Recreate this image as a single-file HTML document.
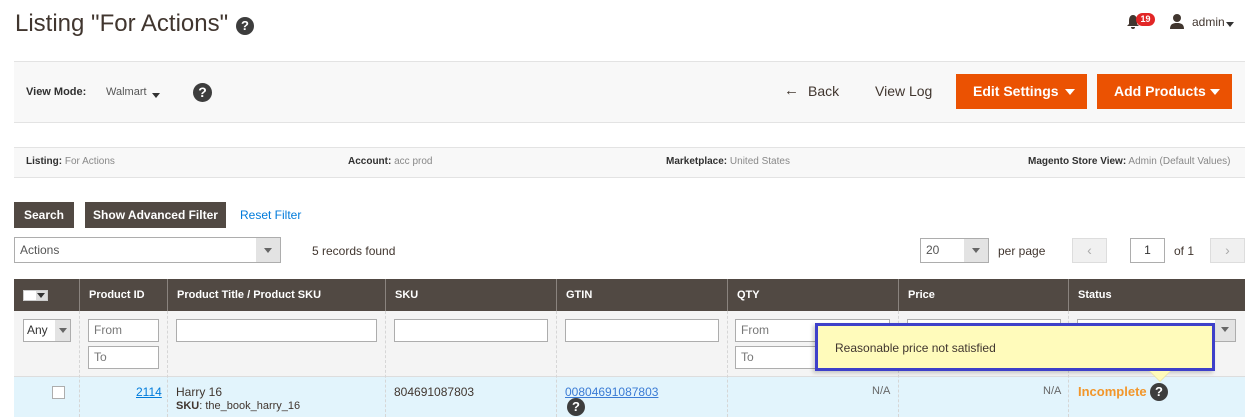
<!DOCTYPE html>
<html><head><meta charset="utf-8">
<style>
*{box-sizing:border-box;margin:0;padding:0}
body{width:1245px;height:417px;overflow:hidden;background:#fff;font-family:"Liberation Sans",sans-serif;color:#303030;position:relative}
.a{position:absolute;white-space:nowrap}
.q{position:absolute;border-radius:50%;background:#3d3d3d;color:#fff;font-weight:bold;text-align:center}
.btn{position:absolute;background:#eb5202;color:#fff;font-weight:bold;font-size:14px;line-height:35px;padding-left:17px;white-space:nowrap}
.btn .tri{position:absolute;right:12px;top:15px;border-top-color:#fff;border-width:6px 5px 0}
.dk{position:absolute;background:#514943;color:#fff;font-weight:bold;font-size:12px;line-height:26px;text-align:center}
.inp{position:absolute;background:#fff;border:1px solid #adadad;font-size:11px;color:#555;padding-left:5px}
.th{position:absolute;top:279px;height:32px;line-height:32px;color:#fff;font-weight:bold;font-size:11px;padding-left:9px;border-left:1px solid #8a837e}
.vl{position:absolute;top:311px;height:106px;border-left:1px dashed #d6d6d6}
.tri{display:inline-block;width:0;height:0;border-left:4px solid transparent;border-right:4px solid transparent;border-top:5px solid #333;vertical-align:middle}
</style></head><body>
<div class="a" style="left:15px;top:10px;font-size:24px;color:#41362f">Listing "For Actions"</div>
<div class="q" style="left:236px;top:17px;width:18px;height:18px;font-size:13px;line-height:18px">?</div>

<svg class="a" style="left:1126px;top:14px" width="14" height="16" viewBox="0 0 14 16"><path d="M7 1C4 1 3 4 3 7v3L1 12h12l-2-2V7c0-3-1-6-4-6z M5 13a2 2 0 0 0 4 0z" fill="#41362f"/></svg>
<div class="a" style="left:1136px;top:13px;width:19px;height:13px;border-radius:7px;background:#e22626;color:#fff;font-size:9px;font-weight:bold;line-height:13px;text-align:center">19</div>
<svg class="a" style="left:1169px;top:13px" width="16" height="16" viewBox="0 0 16 16"><circle cx="8" cy="5" r="4" fill="#41362f"/><path d="M1 16c0-5 3-6 7-6s7 1 7 6z" fill="#41362f"/></svg>
<div class="a" style="left:1192px;top:15px;font-size:12px;color:#41362f">admin</div>
<div class="a" style="left:1226px;top:16px"><span class="tri"></span></div>

<div class="a" style="left:14px;top:61px;width:1231px;height:62px;background:#f8f8f8;border-top:1px solid #e3e3e3;border-bottom:1px solid #e3e3e3"></div>
<div class="a" style="left:26px;top:86px;font-size:11px;font-weight:bold">View Mode:</div>
<div class="a" style="left:106px;top:86px;font-size:11px;color:#555">Walmart</div>
<div class="a" style="left:152px;top:87px"><span class="tri"></span></div>
<div class="q" style="left:193px;top:83px;width:19px;height:19px;font-size:14px;line-height:19px">?</div>
<div class="a" style="left:784px;top:82px;font-size:15px;color:#41362f">&#8592;</div>
<div class="a" style="left:808px;top:83px;font-size:14px;color:#41362f">Back</div>
<div class="a" style="left:875px;top:83px;font-size:14px;color:#41362f">View Log</div>
<div class="btn" style="left:956px;top:74px;width:131px;height:35px">Edit Settings<span class="tri"></span></div>
<div class="btn" style="left:1097px;top:74px;width:135px;height:35px">Add Products<span class="tri"></span></div>

<div class="a" style="left:14px;top:147px;width:1231px;height:31px;background:#f8f8f8;border-top:1px solid #e3e3e3;border-bottom:1px solid #e3e3e3"></div>
<div class="a" style="left:26px;top:156px;font-size:10px"><b>Listing:</b> <span style="color:#888">For Actions</span></div>
<div class="a" style="left:348px;top:156px;font-size:10px"><b>Account:</b> <span style="color:#888">acc prod</span></div>
<div class="a" style="left:666px;top:156px;font-size:10px"><b>Marketplace:</b> <span style="color:#888">United States</span></div>
<div class="a" style="left:1028px;top:156px;font-size:10px"><b>Magento Store View:</b> <span style="color:#888">Admin (Default Values)</span></div>

<div class="dk" style="left:14px;top:202px;width:60px">Search</div>
<div class="dk" style="left:85px;top:202px;width:141px">Show Advanced Filter</div>
<div class="a" style="left:240px;top:208px;font-size:12px;color:#007bdb">Reset Filter</div>

<div class="inp" style="left:14px;top:237px;width:267px;height:26px;line-height:24px;font-size:12px">Actions<div class="a" style="right:0;top:0;width:24px;height:24px;background:#e3e3e3;text-align:center"><span class="tri" style="border-top-color:#666"></span></div></div>
<div class="a" style="left:312px;top:244px;font-size:12px;color:#41362f">5 records found</div>
<div class="inp" style="left:920px;top:238px;width:69px;height:25px;line-height:23px;font-size:12px">20<div class="a" style="right:0;top:0;width:24px;height:23px;background:#e3e3e3;text-align:center"><span class="tri" style="border-top-color:#666"></span></div></div>
<div class="a" style="left:998px;top:244px;font-size:12px;color:#41362f">per page</div>
<div class="a" style="left:1072px;top:238px;width:35px;height:25px;background:#f0f0f0;border:1px solid #ddd;color:#aaa;text-align:center;line-height:23px;font-size:14px">&#8249;</div>
<div class="inp" style="left:1130px;top:238px;width:35px;height:25px;line-height:23px;font-size:12px;text-align:center;padding:0;color:#333">1</div>
<div class="a" style="left:1174px;top:244px;font-size:12px;color:#41362f">of 1</div>
<div class="a" style="left:1210px;top:238px;width:35px;height:25px;background:#f0f0f0;border:1px solid #ddd;color:#aaa;text-align:center;line-height:23px;font-size:14px">&#8250;</div>

<div class="a" style="left:14px;top:279px;width:1231px;height:32px;background:#514943"></div>
<div class="a" style="left:23px;top:290px;width:25px;height:11px;background:#fff;border:1px solid #ccc"></div>
<div class="a" style="left:36px;top:291px;width:11px;height:9px;background:#ddd"></div>
<div class="a" style="left:37px;top:293px;width:0;height:0;border-left:4px solid transparent;border-right:4px solid transparent;border-top:5px solid #333"></div>
<div class="th" style="left:79px">Product ID</div>
<div class="th" style="left:167px">Product Title / Product SKU</div>
<div class="th" style="left:385px">SKU</div>
<div class="th" style="left:556px">GTIN</div>
<div class="th" style="left:727px">QTY</div>
<div class="th" style="left:898px">Price</div>
<div class="th" style="left:1068px">Status</div>

<div class="a" style="left:14px;top:311px;width:1231px;height:66px;background:#f4f4f4;border-bottom:1px solid #ddd"></div>
<div class="a" style="left:14px;top:377px;width:1231px;height:40px;background:#e2f4fc"></div>
<div class="vl" style="left:79px"></div><div class="vl" style="left:167px"></div><div class="vl" style="left:385px"></div><div class="vl" style="left:556px"></div><div class="vl" style="left:727px"></div><div class="vl" style="left:898px"></div><div class="vl" style="left:1068px"></div>

<div class="inp" style="left:23px;top:319px;width:48px;height:23px;line-height:21px;font-size:12px;color:#333;padding-left:3px">Any<div class="a" style="right:0;top:0;width:15px;height:21px;background:#e3e3e3;text-align:center"><span class="tri" style="border-top-color:#666"></span></div></div>
<div class="inp" style="left:88px;top:319px;width:71px;height:23px;line-height:21px;font-size:12px;color:#777">From</div>
<div class="inp" style="left:88px;top:346px;width:71px;height:23px;line-height:21px;font-size:12px;color:#777">To</div>
<div class="inp" style="left:176px;top:319px;width:201px;height:23px"></div>
<div class="inp" style="left:394px;top:319px;width:154px;height:23px"></div>
<div class="inp" style="left:565px;top:319px;width:154px;height:23px"></div>
<div class="inp" style="left:735px;top:319px;width:155px;height:23px;line-height:21px;font-size:12px;color:#777">From</div>
<div class="inp" style="left:735px;top:346px;width:155px;height:23px;line-height:21px;font-size:12px;color:#777">To</div>
<div class="inp" style="left:907px;top:319px;width:154px;height:23px"></div>
<div class="inp" style="left:1077px;top:319px;width:159px;height:23px"><div class="a" style="right:0;top:0;width:20px;height:21px;background:#e3e3e3;text-align:center;line-height:19px"><span class="tri" style="border-top-color:#666"></span></div></div>

<div class="a" style="left:52px;top:386px;width:13px;height:13px;background:#fff;border:1px solid #adadad"></div>
<div class="a" style="left:136px;top:385px;font-size:12px;color:#007bdb;text-decoration:underline">2114</div>
<div class="a" style="left:176px;top:385px;font-size:12px;color:#41362f">Harry 16</div>
<div class="a" style="left:176px;top:400px;font-size:11px;color:#41362f"><b>SKU</b>: the_book_harry_16</div>
<div class="a" style="left:394px;top:385px;font-size:12px;color:#41362f">804691087803</div>
<div class="a" style="left:565px;top:385px;font-size:12px;color:#3a7bd5;text-decoration:underline">00804691087803</div>
<div class="q" style="left:567px;top:398px;width:18px;height:18px;font-size:13px;line-height:18px">?</div>
<div class="a" style="left:872px;top:385px;font-size:11px;color:#666">N/A</div>
<div class="a" style="left:1043px;top:385px;font-size:11px;color:#666">N/A</div>
<div class="a" style="left:1078px;top:384px;font-size:13px;font-weight:bold;color:#f2962a">Incomplete</div>
<div class="q" style="left:1150px;top:383px;width:18px;height:18px;font-size:13px;line-height:18px">?</div>

<div class="a" style="left:815px;top:323px;width:400px;height:48px;background:#fffbbb;border:3px solid #3e40c9;box-shadow:-2px 2px 4px rgba(0,0,0,.2)"></div>
<div class="a" style="left:1149px;top:371px;width:0;height:0;border-left:11px solid transparent;border-right:11px solid transparent;border-top:11px solid #e6e0a0"></div>
<div class="a" style="left:1150px;top:371px;width:0;height:0;border-left:10px solid transparent;border-right:10px solid transparent;border-top:10px solid #fffbbb"></div>
<div class="a" style="left:835px;top:341px;font-size:12px;color:#41362f">Reasonable price not satisfied</div>
</body></html>
